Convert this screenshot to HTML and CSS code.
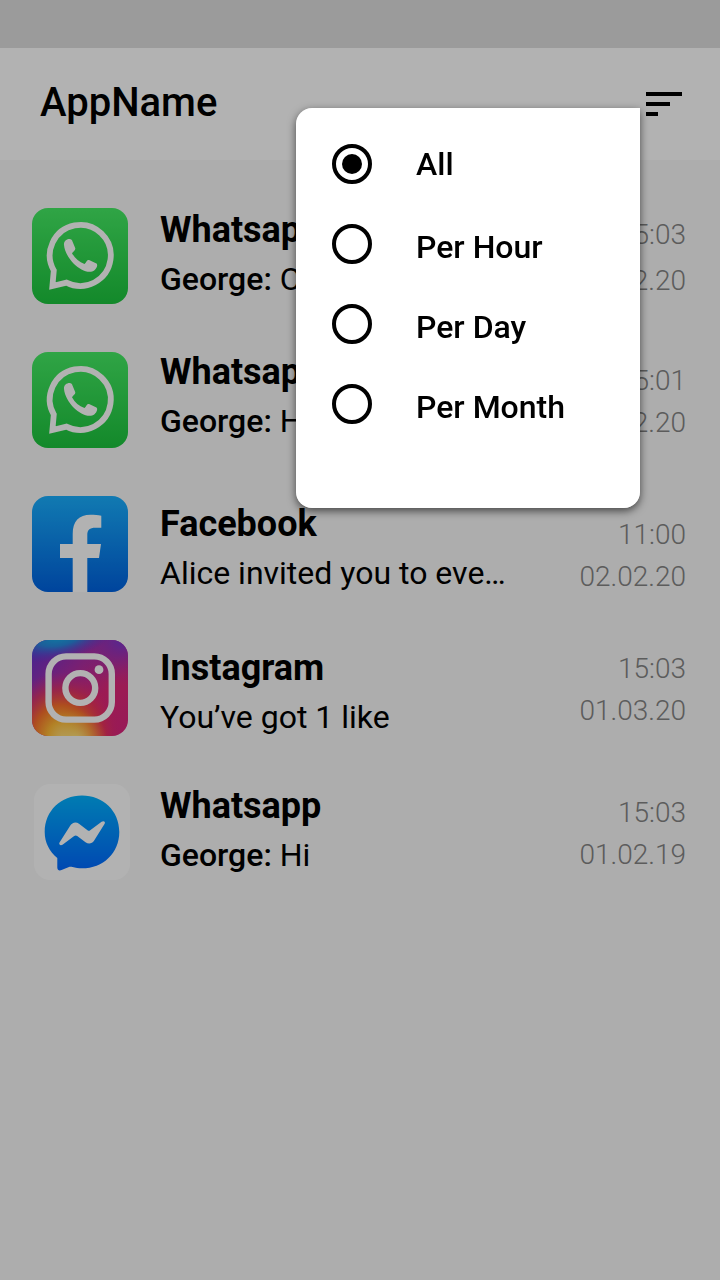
FILE: index.html
```html
<!DOCTYPE html>
<html lang="en">
<head>
<meta charset="utf-8">
<meta name="viewport" content="width=device-width, initial-scale=1">
<title>AppName</title>
<link rel="stylesheet" href="styles.css">
</head>
<body>
<svg class="defs" aria-hidden="true">
  <defs>
    <linearGradient id="green" x1="0" y1="0" x2="0" y2="1"><stop offset="0" stop-color="#45ec64"/><stop offset="1" stop-color="#1cc43d"/></linearGradient>
    <linearGradient id="blue" x1="0" y1="0" x2="0" y2="1"><stop offset="0" stop-color="#19afff"/><stop offset="1" stop-color="#0062e0"/></linearGradient>
    <linearGradient id="azure" x1="0" y1="0" x2="0" y2="1"><stop offset="0" stop-color="#00b2ff"/><stop offset="1" stop-color="#0068ff"/></linearGradient>
    <linearGradient id="insta-base" x1="0" y1="0" x2="1" y2="1"><stop offset="0" stop-color="#5b35d5"/><stop offset=".35" stop-color="#a82fa8"/><stop offset=".65" stop-color="#e02878"/><stop offset="1" stop-color="#d9257c"/></linearGradient>
    <radialGradient id="insta-warm" gradientUnits="userSpaceOnUse" cx="0" cy="0" r="1" gradientTransform="translate(30 98) rotate(-6) scale(58 66)"><stop offset="0" stop-color="#ffe185"/><stop offset=".24" stop-color="#ffbb36"/><stop offset=".5" stop-color="#f9702c"/><stop offset=".75" stop-color="#f03a4c" stop-opacity=".6"/><stop offset="1" stop-color="#e02878" stop-opacity="0"/></radialGradient>
    <radialGradient id="insta-cool" gradientUnits="userSpaceOnUse" cx="0" cy="0" r="1" gradientTransform="translate(28 -4) rotate(-12) scale(58 24)"><stop offset="0" stop-color="#14b2e8"/><stop offset=".4" stop-color="#2a87dd"/><stop offset="1" stop-color="#5b35d5" stop-opacity="0"/></radialGradient>
    <radialGradient id="insta-violet" gradientUnits="userSpaceOnUse" cx="90" cy="0" r="46"><stop offset="0" stop-color="#7a38d0"/><stop offset="1" stop-color="#a82fa8" stop-opacity="0"/></radialGradient>
    <radialGradient id="insta-glow" gradientUnits="userSpaceOnUse" cx="44" cy="102" r="32"><stop offset="0" stop-color="#ffee95"/><stop offset="1" stop-color="#ffbb36" stop-opacity="0"/></radialGradient>
    <symbol id="whatsapp" viewBox="0 0 96 96">
      <rect width="96" height="96" rx="16" fill="url(#green)"/>
      <path fill="none" stroke="#fff" stroke-width="5.8" d="M21.8 62.5A30.5 30.5 0 1 1 34.5 74.6L20.4 78Z"/>
      <path fill="#fff" d="M32 37C31.5 33 35 31 37.4 31C39.5 31 40 32 40.6 33.8L43.2 40C43.8 42 41.5 43 40 45.2C43 50.5 47 54 52.5 56C54.5 54 55 51.6 57 52L64 55.2C66.3 56.3 65 60 62.5 62.2C57 66.5 48 61.5 42 56C37 51 32.5 43.5 32 37Z"/>
    </symbol>
    <symbol id="facebook" viewBox="0 0 96 96">
      <rect width="96" height="96" rx="16" fill="url(#blue)"/>
      <path fill="#fff" d="M40.7 96V62H28V48H40.7V38C40.7 25 47 18.7 58.5 18.7C62.5 18.7 66 19 69.3 19.7V31.7H63.5C57.5 31.7 55.3 34 55.3 39V48H69L67 62H55.3V96Z"/>
    </symbol>
    <symbol id="instagram" viewBox="0 0 96 96">
      <rect width="96" height="96" rx="16" fill="url(#insta-base)"/>
      <rect width="96" height="96" rx="16" fill="url(#insta-violet)"/>
      <rect width="96" height="96" rx="16" fill="url(#insta-cool)"/>
      <rect width="96" height="96" rx="16" fill="url(#insta-warm)"/>
      <rect width="96" height="96" rx="16" fill="url(#insta-glow)"/>
      <g fill="none" stroke="#fff" stroke-width="6.4"><rect x="16.6" y="16.4" width="63.2" height="63.2" rx="17.5"/><circle cx="48.3" cy="48" r="14.9"/></g>
      <circle cx="67" cy="29.7" r="4.4" fill="#fff"/>
    </symbol>
    <symbol id="messenger" viewBox="0 0 96 96">
      <rect width="96" height="96" rx="16" fill="#fff"/>
      <path fill="url(#azure)" d="M48 11.6C27 11.6 10.7 27 10.7 47.9C10.7 58.5 15.5 67.5 23.3 74V83.5C23.3 86 25.3 87 27.5 86L35 82.9C36.3 82.4 37.5 82.7 38.5 83C41.5 83.8 44.7 84.3 48 84.3C69 84.3 85.3 69 85.3 47.9C85.3 27 69 11.6 48 11.6Z"/>
      <path fill="#fff" d="M25.5 58.5L36 42C38 38.4 42 37.4 45 39.8L53.5 46.2C54.5 46.9 55.3 46.9 56.2 46.2L67.6 37.8C69.8 36.2 71.9 38 70.5 40L60 56.8C58 59.8 54.5 60.5 51.5 58.2L43.2 52C42.2 51.3 41.2 51.3 40.2 52L28.5 60.7C26.5 62 24.4 60.4 25.5 58.5Z"/>
    </symbol>
  </defs>
</svg>

<div class="app">
  <div class="status-bar"></div>
  <header class="toolbar">
    <h1 class="toolbar__title">AppName</h1>
    <button class="sort" type="button" aria-label="Filter notifications" aria-expanded="true">
      <svg viewBox="0 0 36 24" width="36" height="24" aria-hidden="true"><path d="M0 0H36V4H0ZM0 10H24V14H0ZM0 20H12V24H0Z"/></svg>
    </button>
    <fieldset class="menu" aria-label="Period">
      <label class="option option--first"><input class="option__radio" type="radio" name="period" checked><span>All</span></label>
      <label class="option"><input class="option__radio" type="radio" name="period"><span>Per Hour</span></label>
      <label class="option"><input class="option__radio" type="radio" name="period"><span>Per Day</span></label>
      <label class="option"><input class="option__radio" type="radio" name="period"><span>Per Month</span></label>
    </fieldset>
  </header>

  <main class="list">
    <article class="row">
      <svg class="row__icon" aria-hidden="true"><use href="#whatsapp"/></svg>
      <div class="row__text"><h2 class="row__title">Whatsapp</h2><p class="row__message"><b>George:</b> Ok</p></div>
      <div class="row__meta row__meta--loose"><time>15:03</time><time>01.02.20</time></div>
    </article>
    <article class="row">
      <svg class="row__icon" aria-hidden="true"><use href="#whatsapp"/></svg>
      <div class="row__text row__text--high"><h2 class="row__title">Whatsapp</h2><p class="row__message"><b>George:</b> Hi</p></div>
      <div class="row__meta"><time>15:01</time><time>01.02.20</time></div>
    </article>
    <article class="row">
      <svg class="row__icon" aria-hidden="true"><use href="#facebook"/></svg>
      <div class="row__text row__text--low"><h2 class="row__title">Facebook</h2><p class="row__message">Alice invited you to eve…</p></div>
      <div class="row__meta row__meta--low"><time>11:00</time><time>02.02.20</time></div>
    </article>
    <article class="row">
      <svg class="row__icon" aria-hidden="true"><use href="#instagram"/></svg>
      <div class="row__text row__text--low"><h2 class="row__title">Instagram</h2><p class="row__message">You’ve got 1 like</p></div>
      <div class="row__meta"><time>15:03</time><time>01.03.20</time></div>
    </article>
    <article class="row row--card">
      <svg class="row__icon" aria-hidden="true"><use href="#messenger"/></svg>
      <div class="row__text"><h2 class="row__title">Whatsapp</h2><p class="row__message"><b>George:</b> Hi</p></div>
      <div class="row__meta"><time>15:03</time><time>01.02.19</time></div>
    </article>
  </main>
</div>
<div class="scrim"></div>
</body>
</html>
```

FILE: styles.css
```css
* {
  box-sizing: border-box;
}

body {
  margin: 0;
  background: #f8f8f8;
  color: #000;
  font-family: Roboto, "Noto Sans", sans-serif;
}

h1, h2, p {
  margin: 0;
}

.defs {
  position: absolute;
  width: 0;
  height: 0;
}

.app {
  min-height: 100vh;
}

.status-bar {
  height: 48px;
  background: #dfdfdf;
}

.toolbar {
  position: relative;
  display: flex;
  align-items: center;
  justify-content: space-between;
  height: 112px;
  padding: 0 38px 0 40px;
  background: #fff;
}

.toolbar__title {
  padding-bottom: 2px;
  font-size: 40px;
  font-weight: 500;
  line-height: 48px;
}

.sort {
  display: flex;
  padding: 0;
  border: 0;
  background: none;
}

/* Filter menu, shown above the scrim */
.menu {
  position: absolute;
  top: 60px;
  right: 80px;
  z-index: 2;
  width: 344px;
  min-height: 400px;
  margin: 0;
  padding: 36px;
  border: 0;
  border-radius: 16px 0 16px 16px;
  background: #fff;
  box-shadow: 0 3px 8px rgba(0, 0, 0, 0.6);
}

.option {
  display: flex;
  gap: 44px;
  height: 80px;
  font-size: 32px;
  font-weight: 500;
  line-height: 46px;
}

.option--first {
  line-height: 40px;
}

.option__radio {
  flex: none;
  width: 40px;
  height: 40px;
  margin: 0;
  border: 4px solid #000;
  border-radius: 50%;
  appearance: none;
}

.option__radio:checked {
  padding: 6px;
  background: #000 content-box;
}

.scrim {
  position: fixed;
  inset: 0;
  z-index: 1;
  background: rgba(0, 0, 0, 0.3);
}

.list {
  display: flex;
  flex-direction: column;
  gap: 48px;
  padding: 48px 34px 48px 32px;
}

.row {
  display: grid;
  grid-template-columns: 96px 1fr auto;
  column-gap: 32px;
  min-height: 96px;
  height: 96px;
}

.row--card {
  column-gap: 30px;
  padding-left: 2px;
}

.row__icon {
  width: 96px;
  height: 96px;
}

.row__text--high {
  margin-top: -2px;
}

.row__text--low {
  margin-top: 6px;
}

.row__title {
  font-size: 36px;
  font-weight: 700;
  line-height: 44px;
}

.row__message {
  font-size: 32px;
  line-height: 54px;
  white-space: nowrap;
}

.row__message b {
  font-weight: 500;
}

.row__meta {
  display: flex;
  flex-direction: column;
  padding-top: 8px;
  color: #848484;
  font-size: 28px;
  font-weight: 300;
  line-height: 42px;
  text-align: right;
}

.row__meta--loose {
  gap: 4px;
  padding-top: 6px;
}

.row__meta--low {
  padding-top: 18px;
}
```
